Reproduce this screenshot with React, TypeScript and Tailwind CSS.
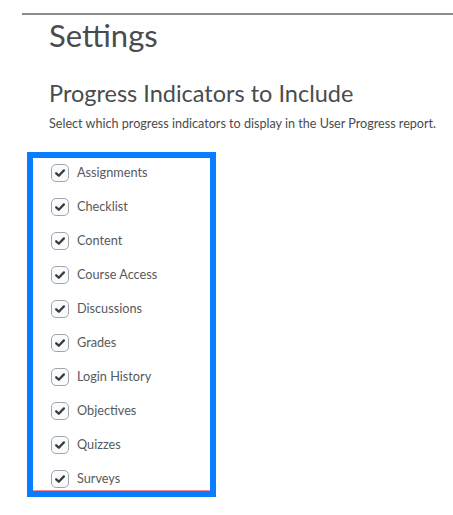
import React from 'react';

const indicators = [
  'Assignments',
  'Checklist',
  'Content',
  'Course Access',
  'Discussions',
  'Grades',
  'Login History',
  'Objectives',
  'Quizzes',
  'Surveys',
];

const CheckBox: React.FC = () => (
  <span className="flex h-[18px] w-[18px] shrink-0 items-center justify-center rounded-[5px] border-[1.5px] border-[#a3a6a9] bg-[#f9fbff]">
    <svg width="12" height="12" viewBox="0 0 12 12" fill="none">
      <path d="M2.2 6.3 4.8 8.7 9.9 3.4" stroke="#3a3d40" strokeWidth="2.3" strokeLinecap="round" strokeLinejoin="round" />
    </svg>
  </span>
);

export default function App() {
  return (
    <div className="h-[515px] w-[453px] overflow-hidden bg-white pt-[13px] font-['Lato',sans-serif]">
      <div className="ml-[22px] h-[2px] bg-[#8c8c8c]" />

      <div className="pl-[49px]">
        <h1 className="mt-[2px] text-[31px] leading-[37px] text-[#494c4e]">Settings</h1>
        <h2 className="mt-[25px] text-[23.5px] leading-[28px] text-[#494c4e]">Progress Indicators to Include</h2>
        <p className="mt-[9px] text-[12.6px] leading-[16px] text-[#494c4e]">
          Select which progress indicators to display in the User Progress report.
        </p>
      </div>

      <div className="ml-[27px] mt-[20px] w-[189px] border-[6px] border-[#0a7cff]">
        <ul className="flex flex-col gap-[16px] pl-[18px] pt-[6px] pb-[2px]">
          {indicators.map((name) => (
            <li key={name} className="flex h-[18px] items-center gap-[8px]">
              <CheckBox />
              <span className="text-[12.7px] text-[#565a5c]">{name}</span>
            </li>
          ))}
        </ul>
        <div className="h-px bg-[#f28b8b]" />
      </div>
    </div>
  );
}
